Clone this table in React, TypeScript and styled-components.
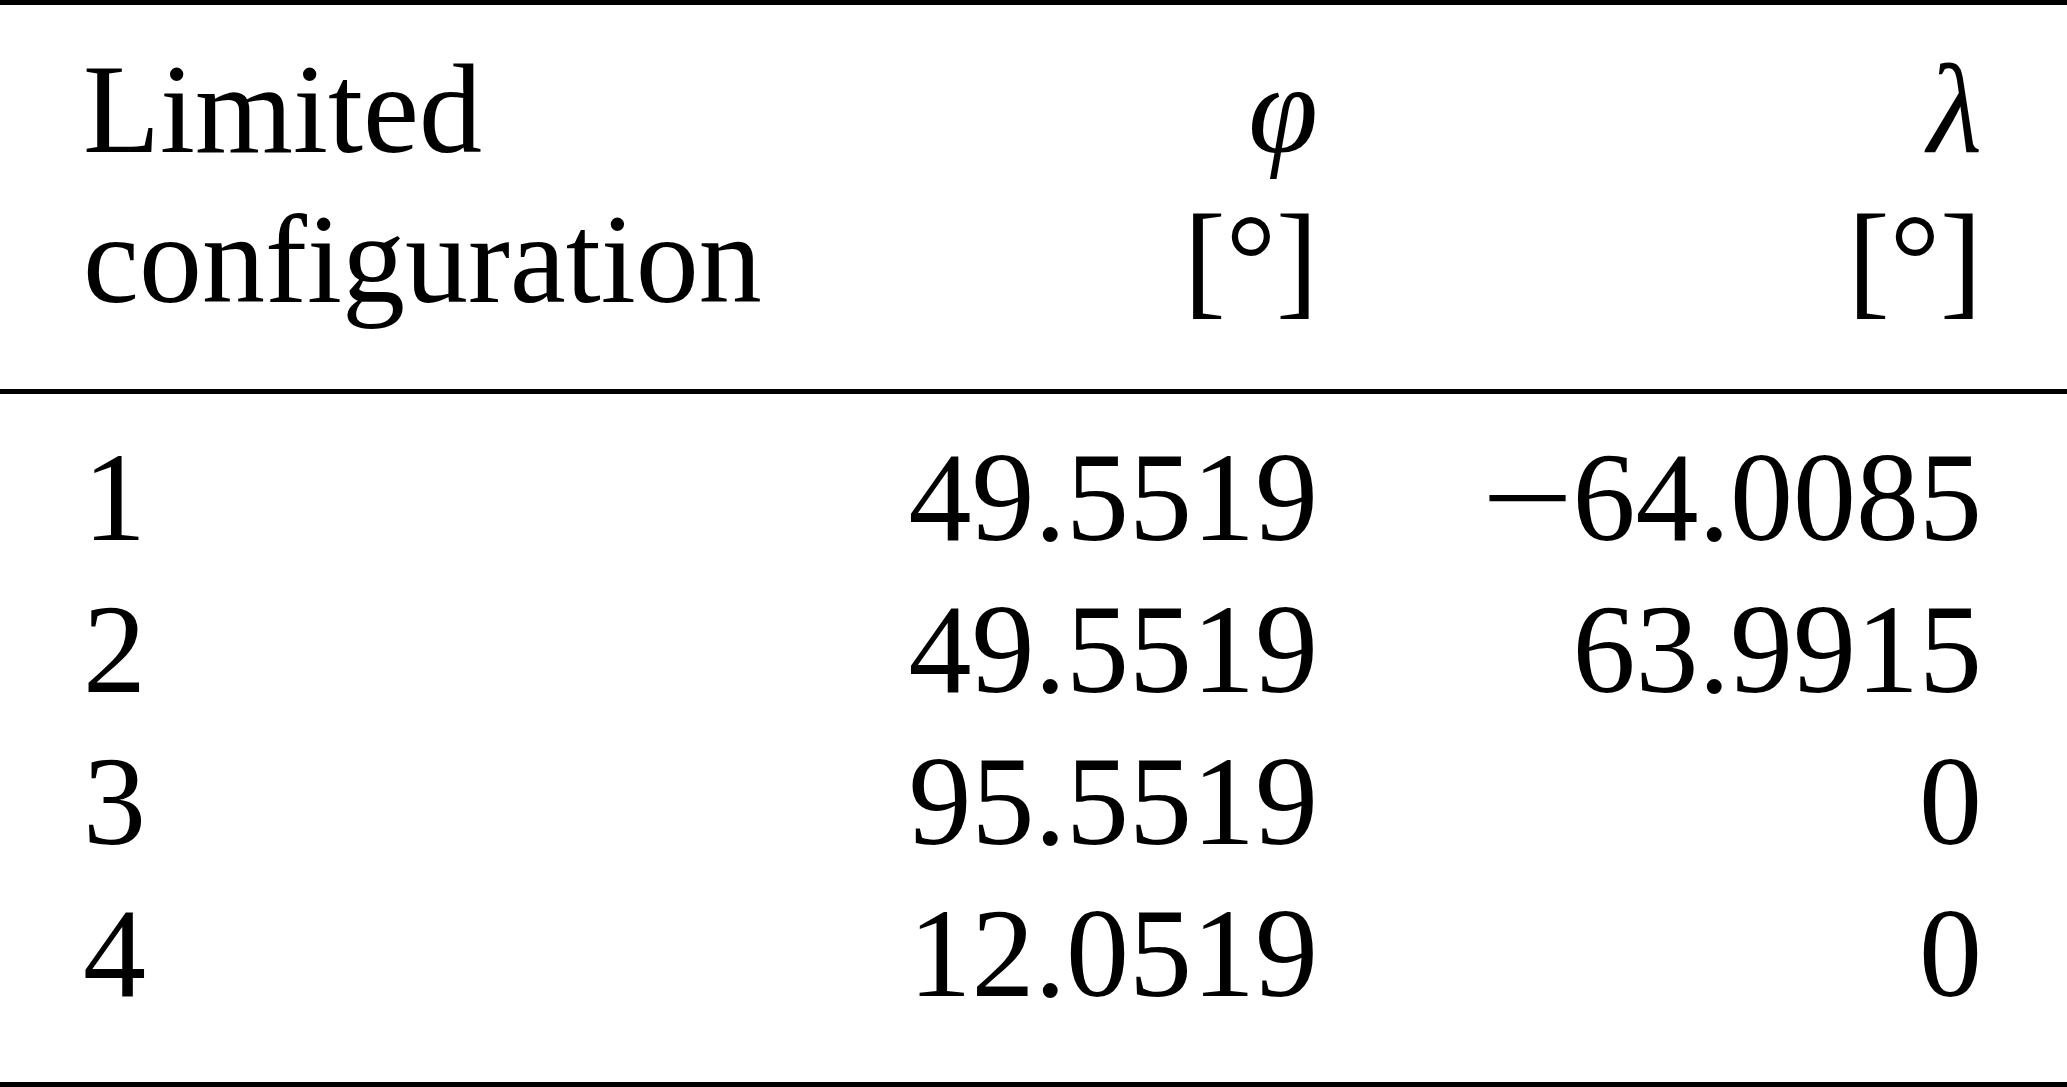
import styled, { createGlobalStyle } from 'styled-components';

const GlobalStyle = createGlobalStyle`
  html, body {
    margin: 0;
    padding: 0;
    background: #fff;
  }
`;

// booktabs style table, all three rules have the same weight here
const Page = styled.div`
  width: 2067px;
  height: 1087px;
  display: flex;
  flex-direction: column;
  background: #fff;
  color: #000;
  font-family: 'Liberation Serif', 'Times New Roman', serif;
  font-size: 126px;
  overflow: hidden;
`;

const Rule = styled.div`
  height: 5px;
  background: #000;
  flex: none;
`;

const Section = styled.div<{ $top: number; $bottom: number }>`
  padding: ${(p) => p.$top}px 85px ${(p) => p.$bottom}px 83px;
`;

const Row = styled.div<{ $lh: number }>`
  display: grid;
  grid-template-columns: 700px 535px 664px;
  line-height: ${(p) => p.$lh}px;
`;

const Cell = styled.div<{ $align?: 'left' | 'right' }>`
  text-align: ${(p) => p.$align || 'left'};
  white-space: nowrap;
`;

const MathSym = styled.span`
  font-style: italic;
`;

// math minus in the reference is longer than the text one
const Minus = styled.span`
  display: inline-block;
  transform: translateX(-9px) scaleX(1.3);
  transform-origin: center;
`;

const rows = [
  ['1', '49.5519', '-64.0085'],
  ['2', '49.5519', '63.9915'],
  ['3', '95.5519', '0'],
  ['4', '12.0519', '0'],
];

const Num = ({ v }: { v: string }) =>
  v.startsWith('-') ? (
    <>
      <Minus>{'\u2212'}</Minus>
      {v.slice(1)}
    </>
  ) : (
    <>{v}</>
  );

export default function App() {
  return (
    <Page>
      <GlobalStyle />
      <Rule />
      <Section $top={30} $bottom={54}>
        <Row $lh={150}>
          <Cell>Limited</Cell>
          <Cell $align="right">
            <MathSym>φ</MathSym>
          </Cell>
          <Cell $align="right">
            <MathSym>λ</MathSym>
          </Cell>
        </Row>
        <Row $lh={150}>
          <Cell>configuration</Cell>
          <Cell $align="right">[°]</Cell>
          <Cell $align="right">[°]</Cell>
        </Row>
      </Section>
      <Rule />
      <Section $top={28} $bottom={52}>
        {rows.map((r) => (
          <Row $lh={152} key={r[0]}>
            <Cell>{r[0]}</Cell>
            <Cell $align="right">
              <Num v={r[1]} />
            </Cell>
            <Cell $align="right">
              <Num v={r[2]} />
            </Cell>
          </Row>
        ))}
      </Section>
      <Rule />
    </Page>
  );
}
